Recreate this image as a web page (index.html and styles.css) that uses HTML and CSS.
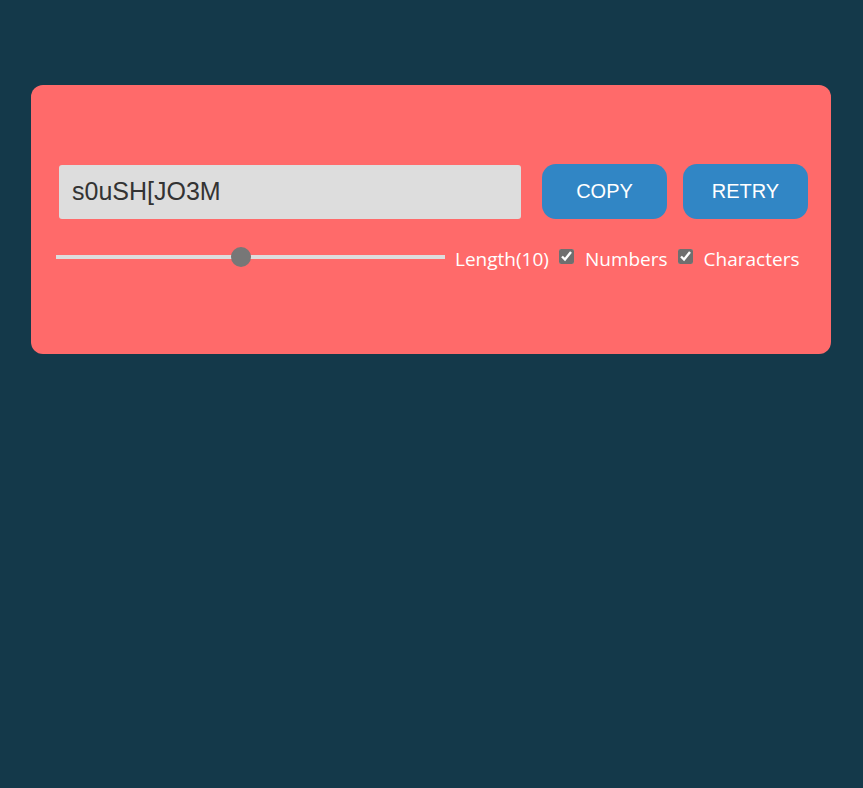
FILE: index.html
```html
<!DOCTYPE html>
<html>
<head>
<meta charset="utf-8">
<link rel="stylesheet" href="styles.css">
</head>
<body>
<div class="card">
  <div class="row top">
    <input class="pw" type="text" value="s0uSH[JO3M" readonly>
    <button class="btn">COPY</button>
    <button class="btn">RETRY</button>
  </div>
  <div class="row opts">
    <input class="range" type="range" min="1" max="20" value="10">
    <label class="lbl">Length(10)</label>
    <input class="chk" type="checkbox" checked>
    <label class="lbl">Numbers</label>
    <input class="chk" type="checkbox" checked>
    <label class="lbl">Characters</label>
  </div>
</div>
</body>
</html>
```
FILE: styles.css
```css
html, body {
  margin: 0;
  padding: 0;
  background: #14394a;
  height: 100%;
}
body {
  padding: 85px 32px 0 31px;
  box-sizing: border-box;
}
.card {
  width: 800px;
  height: 269px;
  box-sizing: border-box;
  background: #ff6a6a;
  border-radius: 12px;
  padding: 79px 23px 0 28px;
}
.row {
  display: flex;
  align-items: center;
}
.top {
  height: 55px;
}
.pw {
  width: 462px;
  height: 54px;
  box-sizing: border-box;
  border: none;
  border-radius: 3px;
  background: #dddddd;
  color: #333;
  font-family: "Liberation Sans", Arial, sans-serif;
  font-size: 25px;
  padding: 0 0 0 13px;
  margin: 0 21px 0 0;
  outline: none;
}
.btn {
  width: 125px;
  height: 55px;
  border: none;
  border-radius: 14px;
  background: #3186c5;
  color: #fff;
  font-family: "Liberation Sans", Arial, sans-serif;
  font-size: 20px;
  margin: 0 16px 0 0;
  padding: 0;
}
.btn:last-child {
  margin-right: 0;
}
.opts {
  margin-top: 28px;
  margin-left: -3px;
  height: 24px;
}
.range {
  -webkit-appearance: none;
  appearance: none;
  width: 389px;
  height: 4px;
  background: #dddddd;
  margin: 0 10px 4px 0;
  outline: none;
}
.range::-webkit-slider-thumb {
  -webkit-appearance: none;
  width: 20px;
  height: 20px;
  border-radius: 50%;
  background: #777777;
  border: none;
}
.lbl {
  font-family: "Open Sans", "Noto Sans", sans-serif;
  font-size: 19px;
  color: #fff;
  line-height: 24px;
}
.chk {
  width: 15px;
  height: 15px;
  margin: 0 11px 0 10px;
  accent-color: #6f6f6f;
  position: relative;
  top: -3px;
}
```
